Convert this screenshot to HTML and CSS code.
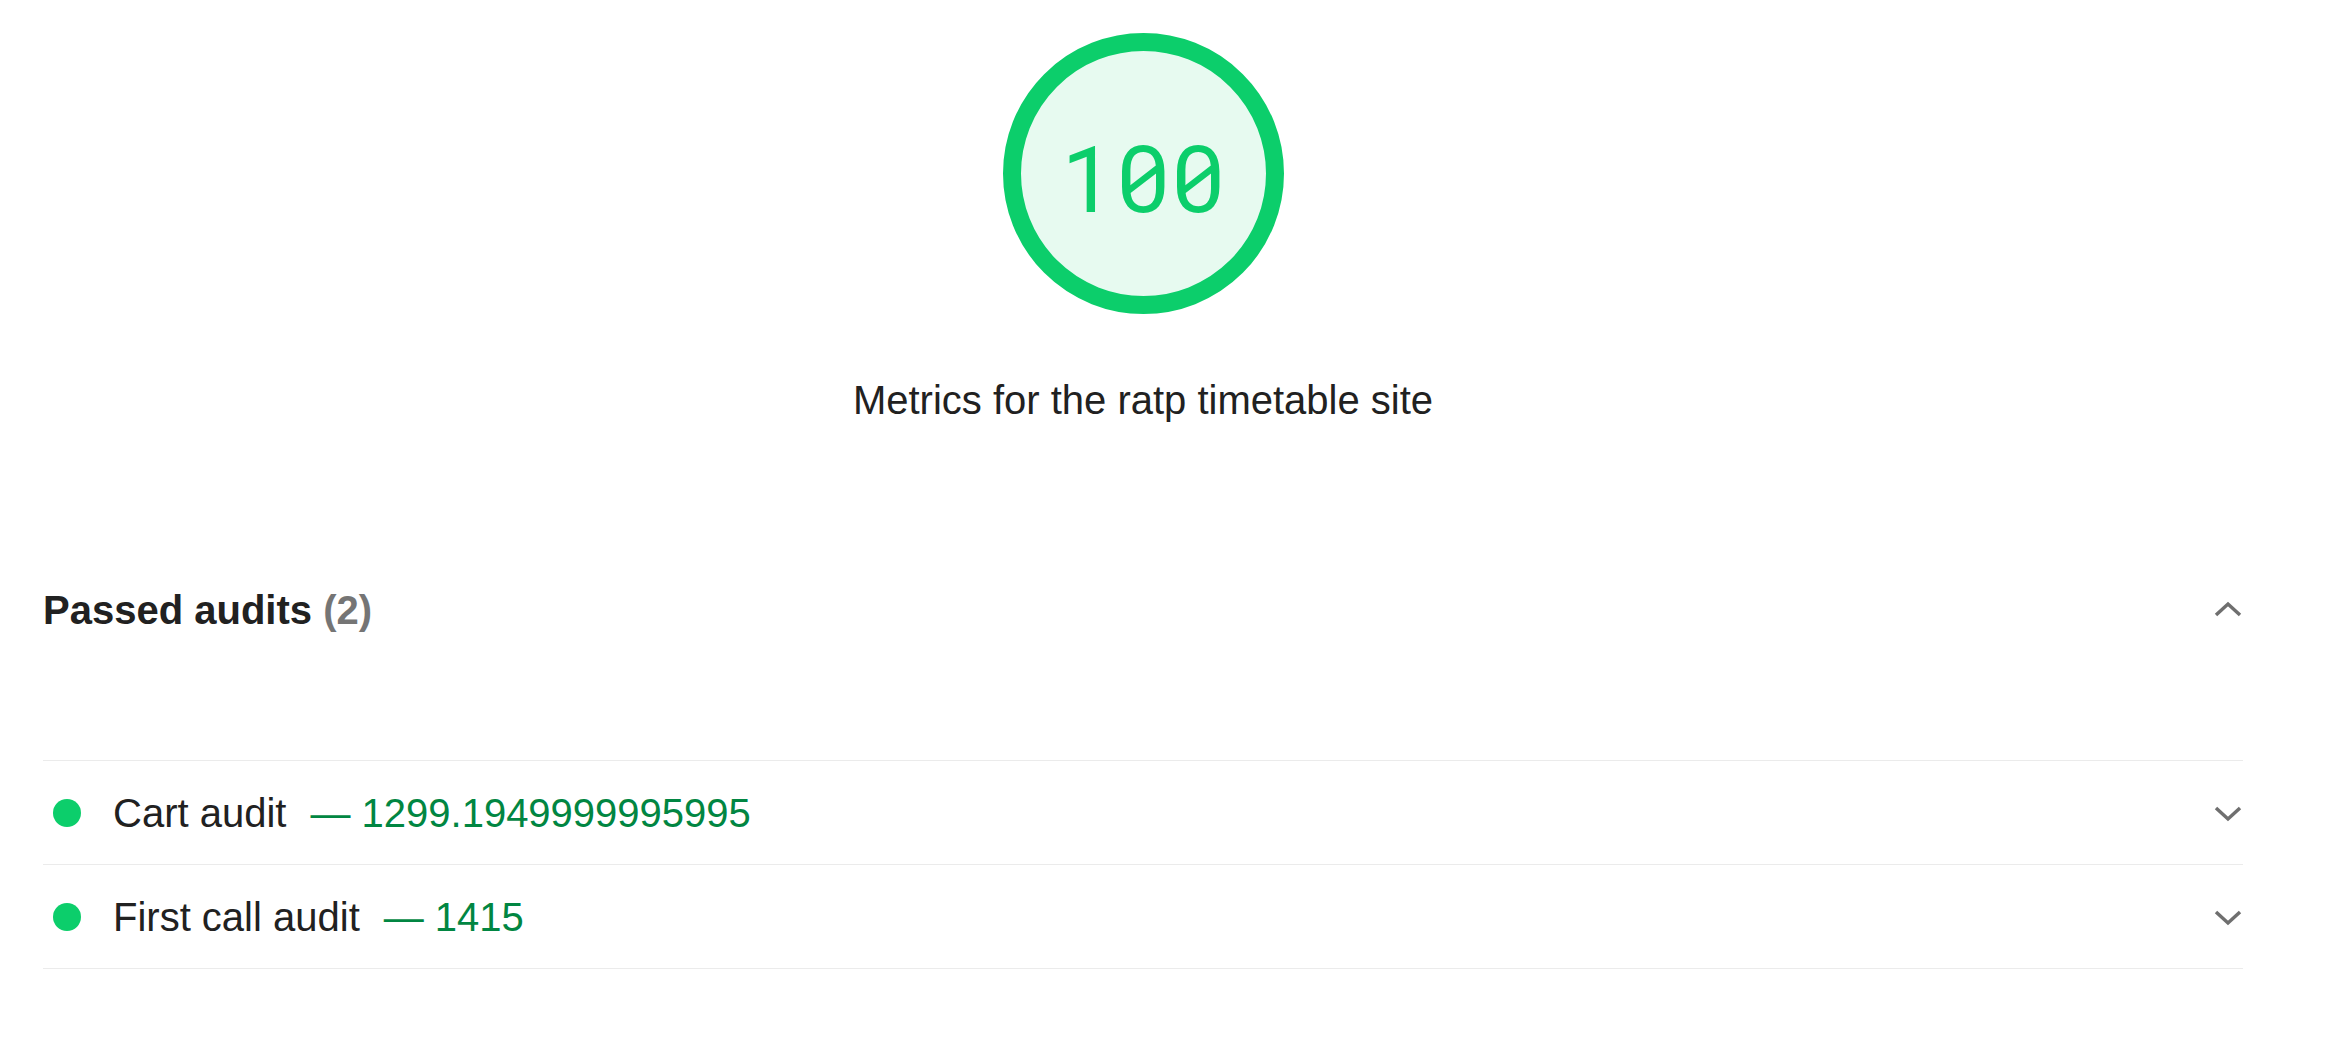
FILE: index.html
```html
<!DOCTYPE html>
<html lang="en">
<head>
<meta charset="utf-8">
<title>Lighthouse report</title>
<link rel="stylesheet" href="styles.css">
</head>
<body>
<div class="report">
  <div class="gauge-wrap">
    <div class="gauge"><span class="gauge-value">100</span></div>
  </div>
  <div class="category-title">Metrics for the ratp timetable site</div>

  <div class="clump">
    <div class="clump-header">
      <span class="clump-title">Passed audits <span class="clump-count">(2)</span></span>
      <svg class="chevron" viewBox="0 0 30 30" width="30" height="30"><polyline points="3,20 15,9 27,20"/></svg>
    </div>
    <div class="audits">
      <div class="audit">
        <span class="dot"></span>
        <span class="audit-title">Cart audit</span>
        <span class="audit-value">— 1299.1949999995995</span>
        <svg class="chevron" viewBox="0 0 30 30" width="30" height="30"><polyline points="3,10 15,21 27,10"/></svg>
      </div>
      <div class="audit">
        <span class="dot"></span>
        <span class="audit-title">First call audit</span>
        <span class="audit-value">— 1415</span>
        <svg class="chevron" viewBox="0 0 30 30" width="30" height="30"><polyline points="3,10 15,21 27,10"/></svg>
      </div>
    </div>
  </div>
</div>
</body>
</html>
```
FILE: styles.css
```css
html, body {
  margin: 0;
  padding: 0;
  background: #ffffff;
}
body {
  font-family: "Liberation Sans", Arial, sans-serif;
  color: #212121;
}
.report {
  width: 2200px;
  margin-left: 43px;
  padding-top: 33px;
}
.gauge-wrap {
  display: flex;
  justify-content: center;
}
.gauge {
  box-sizing: border-box;
  width: 281px;
  height: 281px;
  border-radius: 50%;
  border: 18px solid #0cce6b;
  background: #e7faf0;
  display: flex;
  align-items: center;
  justify-content: center;
}
.gauge-value {
  font-family: "Roboto Mono", "DejaVu Sans Mono", monospace;
  font-size: 92px;
  font-weight: 400;
  line-height: 1;
  color: #0cce6b;
  padding-top: 6px;
}
.category-title {
  text-align: center;
  font-size: 40px;
  line-height: 48px;
  margin-top: 62px;
}
.clump {
  margin-top: 162px;
}
.clump-header {
  display: flex;
  align-items: center;
  justify-content: space-between;
  height: 48px;
}
.clump-title {
  font-size: 40px;
  line-height: 48px;
  font-weight: bold;
}
.clump-count {
  color: #757575;
}
.chevron {
  flex: none;
}
.chevron polyline {
  fill: none;
  stroke: #6f6f6f;
  stroke-width: 3.5;
}
.audits {
  margin-top: 126px;
  border-bottom: 1px solid #ebebeb;
}
.audit {
  display: flex;
  align-items: center;
  height: 103px;
  border-top: 1px solid #ebebeb;
  font-size: 40px;
  line-height: 48px;
}
.dot {
  width: 28px;
  height: 28px;
  border-radius: 50%;
  background: #0cce6b;
  margin-left: 10px;
  margin-right: 32px;
  flex: none;
}
.audit-value {
  color: #018642;
  margin-left: 24px;
}
.audit .chevron {
  margin-left: auto;
}
```
